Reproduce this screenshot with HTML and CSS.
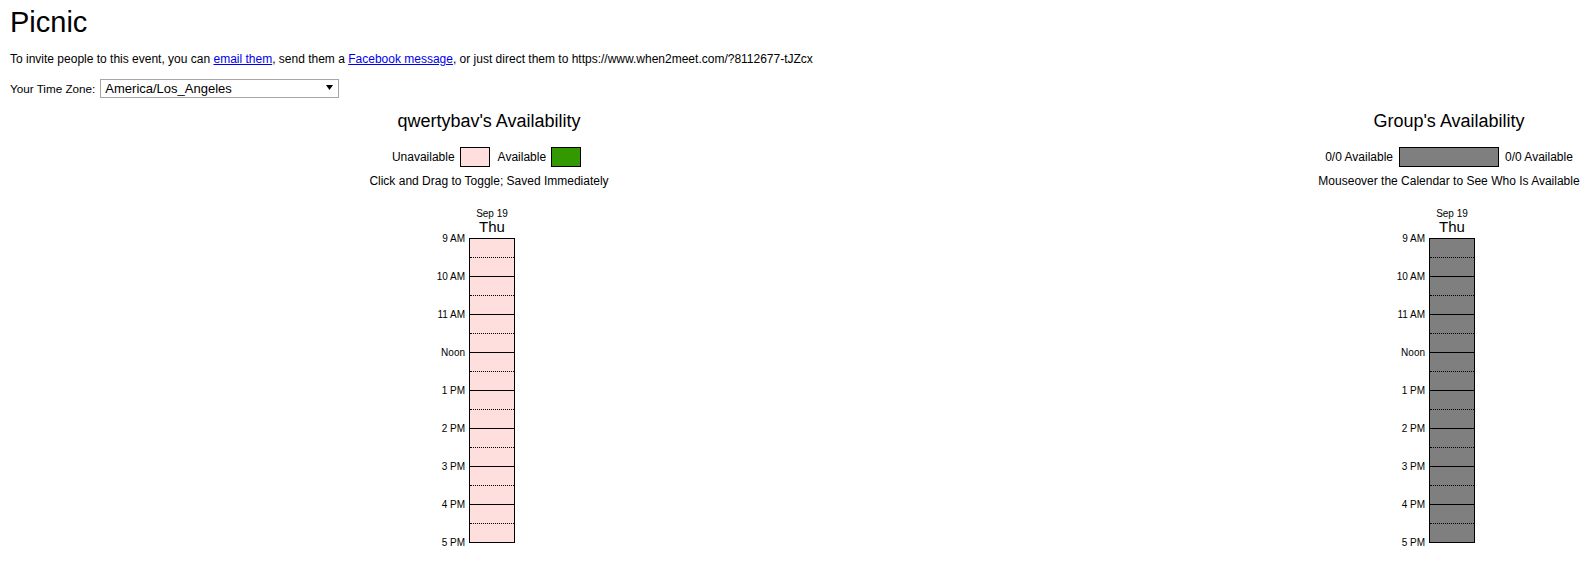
FILE: index.html
```html
<!DOCTYPE html>
<html>
<head>
<meta charset="utf-8">
<title>Picnic</title>
<link rel="stylesheet" href="styles.css">
</head>
<body>
<div class="page">
  <header class="intro">
    <h1 class="title">Picnic</h1>
    <p class="invite">To invite people to this event, you can <a href="#">email them</a>, send them a <a href="#">Facebook message</a>, or just direct them to https://www.when2meet.com/?8112677-tJZcx</p>
    <div class="tz-row">
      <label class="tz-label" for="tz">Your Time Zone:</label>
      <span class="select-wrap">
        <select id="tz" class="tz-select"><option>America/Los_Angeles</option></select>
        <svg class="select-arrow" width="7" height="5" viewBox="0 0 7 5"><path d="M0 0H7L3.5 5Z" fill="#000"/></svg>
      </span>
    </div>
  </header>

  <main class="grids">
    <section class="avail you">
      <h2 class="avail-title">qwertybav's Availability</h2>
      <div class="legend">
        <span class="legend-text">Unavailable</span>
        <span class="swatch pink"></span>
        <span class="legend-text">Available</span>
        <span class="swatch green"></span>
      </div>
      <p class="hint">Click and Drag to Toggle; Saved Immediately</p>
      <div class="grid">
        <div class="labels">
          <div class="lbl">9 AM</div><div class="lbl">10 AM</div><div class="lbl">11 AM</div><div class="lbl">Noon</div><div class="lbl">1 PM</div><div class="lbl">2 PM</div><div class="lbl">3 PM</div><div class="lbl">4 PM</div><div class="lbl last">5 PM</div>
        </div>
        <div class="day">
          <div class="day-date">Sep 19</div>
          <div class="day-name">Thu</div>
          <div class="col pink">
            <div class="slot"></div><div class="slot half"></div><div class="slot hour"></div><div class="slot half"></div><div class="slot hour"></div><div class="slot half"></div><div class="slot hour"></div><div class="slot half"></div><div class="slot hour"></div><div class="slot half"></div><div class="slot hour"></div><div class="slot half"></div><div class="slot hour"></div><div class="slot half"></div><div class="slot hour"></div><div class="slot half"></div>
          </div>
        </div>
        <div class="spacer"></div>
      </div>
    </section>

    <section class="avail group">
      <h2 class="avail-title">Group's Availability</h2>
      <div class="legend">
        <span class="legend-text">0/0 Available</span>
        <span class="bar"></span>
        <span class="legend-text">0/0 Available</span>
      </div>
      <p class="hint">Mouseover the Calendar to See Who Is Available</p>
      <div class="grid">
        <div class="labels">
          <div class="lbl">9 AM</div><div class="lbl">10 AM</div><div class="lbl">11 AM</div><div class="lbl">Noon</div><div class="lbl">1 PM</div><div class="lbl">2 PM</div><div class="lbl">3 PM</div><div class="lbl">4 PM</div><div class="lbl last">5 PM</div>
        </div>
        <div class="day">
          <div class="day-date">Sep 19</div>
          <div class="day-name">Thu</div>
          <div class="col gray">
            <div class="slot"></div><div class="slot half"></div><div class="slot hour"></div><div class="slot half"></div><div class="slot hour"></div><div class="slot half"></div><div class="slot hour"></div><div class="slot half"></div><div class="slot hour"></div><div class="slot half"></div><div class="slot hour"></div><div class="slot half"></div><div class="slot hour"></div><div class="slot half"></div><div class="slot hour"></div><div class="slot half"></div>
          </div>
        </div>
        <div class="spacer"></div>
      </div>
    </section>
  </main>
</div>
</body>
</html>
```

FILE: styles.css
```css
html, body {
  margin: 0;
  padding: 0;
  background: #fff;
}

body {
  font-family: "Liberation Sans", Arial, sans-serif;
  color: #000;
}

.page {
  padding: 0 8px;
}

.intro {
  padding-left: 2px;
}

.title {
  margin: 0;
  padding-top: 6px;
  font-size: 29px;
  line-height: 33px;
  font-weight: normal;
}

.invite {
  margin: 13px 0 0;
  font-size: 12px;
  line-height: 14px;
}

.invite a {
  color: #0000ee;
}

.tz-row {
  display: flex;
  align-items: center;
  margin-top: 13px;
  height: 19px;
}

.tz-label {
  font-size: 11.7px;
  margin-right: 5px;
}

.select-wrap {
  position: relative;
  display: inline-block;
}

.tz-select {
  -webkit-appearance: none;
  appearance: none;
  display: block;
  width: 239px;
  height: 19px;
  margin: 0;
  padding: 0 0 0 4px;
  border: 1px solid #a6a6a6;
  border-radius: 0;
  background: #fff;
  font-family: "Liberation Sans", Arial, sans-serif;
  font-size: 13px;
  color: #000;
}

.select-arrow {
  position: absolute;
  right: 6px;
  top: 6px;
  pointer-events: none;
}

.grids {
  display: flex;
  justify-content: space-between;
  align-items: flex-start;
  margin-top: 12px;
}

.avail {
  display: flex;
  flex-direction: column;
  align-items: center;
}

.avail.you {
  width: 962px;
}

.avail.group {
  width: 262px;
}

.avail-title {
  margin: 0;
  font-size: 18px;
  line-height: 22px;
  font-weight: normal;
  white-space: nowrap;
}

.legend {
  display: flex;
  align-items: center;
  margin-top: 15px;
  height: 20px;
  font-size: 12px;
  white-space: nowrap;
}

.you .legend {
  padding-right: 5px;
}

.you .legend .legend-text {
  margin-right: 5px;
}

.you .legend .swatch.pink {
  margin-right: 8px;
}

.swatch {
  display: block;
  box-sizing: border-box;
  width: 30px;
  height: 20px;
  border: 1px solid #000;
}

.swatch.pink { background: #ffdede; }
.swatch.green { background: #339900; }

.bar {
  display: block;
  box-sizing: border-box;
  width: 100px;
  height: 20px;
  margin: 0 6px;
  border: 1px solid #000;
  background: #7f7f7f;
}

.hint {
  margin: 7px 0 0;
  font-size: 12px;
  line-height: 14px;
  white-space: nowrap;
}

.grid {
  display: flex;
  align-items: flex-start;
  margin-top: 21px;
}

.labels {
  width: 46px;
  padding-right: 4px;
  margin-top: 25px;
  display: flex;
  flex-direction: column;
  align-items: flex-end;
  font-size: 10px;
}

.lbl {
  height: 38px;
  line-height: 10px;
  white-space: nowrap;
}

.lbl.last {
  height: 10px;
}

.day {
  width: 46px;
  display: flex;
  flex-direction: column;
  align-items: center;
}

.day-date {
  font-size: 10px;
  line-height: 10px;
  white-space: nowrap;
}

.day-name {
  font-size: 15px;
  line-height: 15px;
  margin-bottom: 4px;
}

.col {
  box-sizing: border-box;
  width: 46px;
  border: 1px solid #000;
}

.col.pink { background: #ffdede; }
.col.gray { background: #7f7f7f; }

.slot {
  height: 18px;
}

.slot.half {
  border-top: 1px dotted #000;
}

.slot.hour {
  border-top: 1px solid #000;
}

.spacer {
  width: 44px;
}
```
